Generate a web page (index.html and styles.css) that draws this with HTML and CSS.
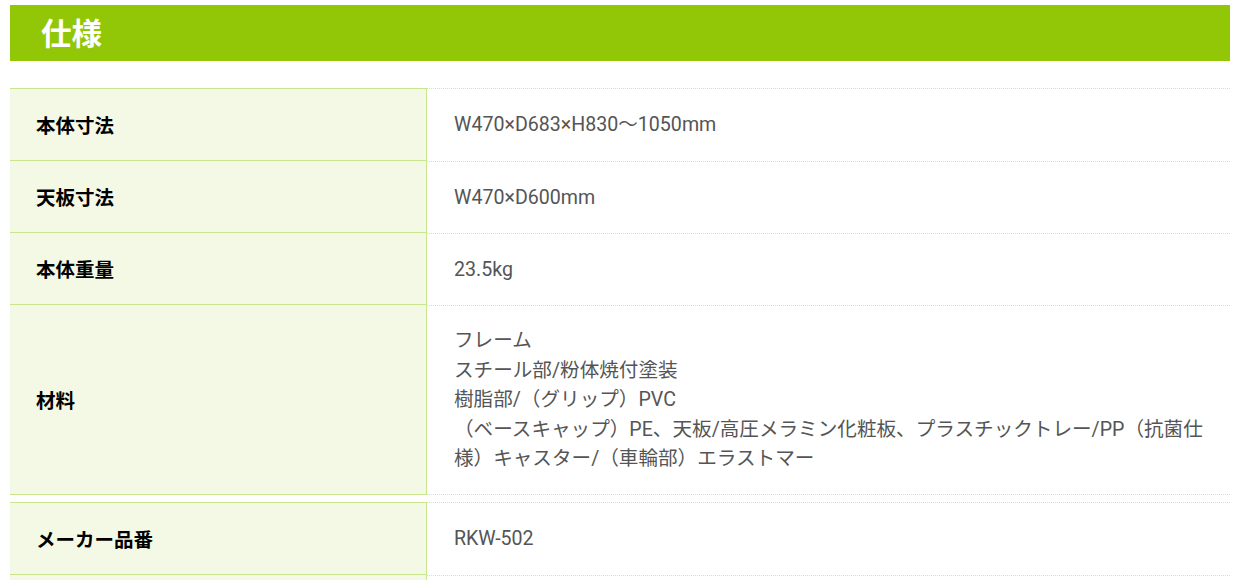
FILE: index.html
```html
<!DOCTYPE html>
<html lang="ja">
<head>
<meta charset="utf-8">
<title>仕様</title>
<link rel="stylesheet" href="styles.css">
</head>
<body>
<div class="page">
  <h2 class="heading">仕様</h2>
  <div class="spec">
    <div class="row">
      <div class="label">本体寸法</div>
      <div class="value">W470×D683×H830～1050mm</div>
    </div>
    <div class="row">
      <div class="label">天板寸法</div>
      <div class="value">W470×D600mm</div>
    </div>
    <div class="row">
      <div class="label">本体重量</div>
      <div class="value">23.5kg</div>
    </div>
    <div class="row">
      <div class="label">材料</div>
      <div class="value">フレーム<br>スチール部/粉体焼付塗装<br>樹脂部/（グリップ）PVC<br>（ベースキャップ）PE、天板/高圧メラミン化粧板、プラスチックトレー/PP（抗菌仕<br>様）キャスター/（車輪部）エラストマー</div>
    </div>
  </div>
  <div class="spec">
    <div class="row">
      <div class="label">メーカー品番</div>
      <div class="value">RKW-502</div>
    </div>
    <div class="row">
      <div class="label">&nbsp;</div>
      <div class="value">&nbsp;</div>
    </div>
  </div>
</div>
</body>
</html>
```

FILE: styles.css
```css
html, body {
  margin: 0;
  padding: 0;
  background: #fff;
}
.page {
  padding: 5px 8px 0 10px;
  font-family: Roboto, "Noto Sans CJK JP", sans-serif;
}
.heading {
  margin: 0;
  height: 56px;
  background: #91c706;
  color: #fff;
  font-family: "Noto Sans CJK JP", sans-serif;
  font-weight: 700;
  font-size: 30.5px;
  line-height: 54px;
  padding-left: 31px;
}
.spec {
  margin-top: 27px;
}
.spec + .spec {
  margin-top: 7px;
}
.row {
  display: grid;
  grid-template-columns: 417px 1fr;
  min-height: 72px;
}
.row:first-child {
  min-height: 73px;
}
.label {
  background: #f3f9e5;
  border-right: 1px solid #c9e68e;
  border-bottom: 1px solid #c9e68e;
  padding: 20px 0 20px 26px;
  display: flex;
  align-items: center;
  font-family: "Noto Sans CJK JP", sans-serif;
  font-weight: 700;
  font-size: 19.5px;
  line-height: 29px;
  color: #000;
}
.row:first-child .label {
  border-top: 1px solid #c9e68e;
}
.value {
  border-top: 1px dotted #dcdcdc;
  padding: 20px 20px 20px 27px;
  font-size: 19.6px;
  line-height: 29.5px;
  color: #555;
  display: flex;
  align-items: center;
}
.row:last-child .value {
  border-bottom: 1px dotted #dcdcdc;
}
```
